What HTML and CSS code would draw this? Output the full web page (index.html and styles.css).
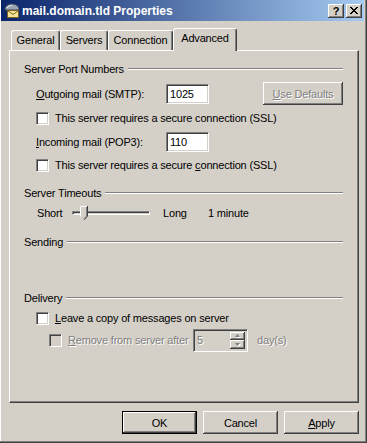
FILE: index.html
```html
<!DOCTYPE html>
<html lang="en">
<head>
    <meta charset="UTF-8">
    <title>mail.domain.tld Properties</title>
    <link rel="stylesheet" href="styles.css">
</head>
<body>
    <div class="window">
        <div class="titlebar">
            <svg class="title-icon" width="16" height="16" viewBox="0 0 16 16">
                <path d="M1 7 C1 3 4 1 8 1 C12 1 15 3 15 7 Z" fill="#9aa4b4" stroke="#3c4658"/>
                <path d="M3 5 C4 3 6 2.5 8 2.5" fill="none" stroke="#e8ecf4"/>
                <rect x="3.5" y="7.5" width="11" height="7" fill="#f6e39a" stroke="#7a6420"/>
                <path d="M3.5 7.5 L9 11.5 L14.5 7.5" fill="none" stroke="#7a6420"/>
            </svg>
            <span class="title-text">mail.domain.tld Properties</span>
            <div class="caption-buttons">
                <span class="cap-btn help">?</span>
                <span class="cap-btn">
                    <svg width="8" height="7" viewBox="0 0 8 7">
                        <path d="M0 0 L7 7 M1 0 L8 7 M7 0 L0 7 M8 0 L1 7" stroke="#000" stroke-width="1"/>
                    </svg>
                </span>
            </div>
        </div>

        <div class="client">
            <div class="tabs">
                <div class="tab tab-general">General</div>
                <div class="tab tab-servers">Servers</div>
                <div class="tab tab-connection">Connection</div>
                <div class="tab active">Advanced</div>
            </div>

            <div class="panel">
                <div class="group-title g-ports">Server Port Numbers</div>

                <div class="row r-smtp">
                    <span class="field-label"><u>O</u>utgoing mail (SMTP):</span>
                    <span class="textbox">1025</span>
                    <span class="btn btn-defaults disabled"><u>U</u>se Defaults</span>
                </div>

                <div class="row r-check">
                    <span class="check"></span>
                    <span>This server requires a secure connection (SSL)</span>
                </div>

                <div class="row r-pop">
                    <span class="field-label"><u>I</u>ncoming mail (POP3):</span>
                    <span class="textbox">110</span>
                </div>

                <div class="row r-check">
                    <span class="check"></span>
                    <span>This server requires a secure <u>c</u>onnection (SSL)</span>
                </div>

                <div class="group-title g-timeouts">Server Timeouts</div>

                <div class="row r-slider">
                    <span class="slider-label">Short</span>
                    <span class="slider">
                        <span class="track"></span>
                        <svg class="thumb" width="8" height="14" viewBox="0 0 8 14">
                            <path d="M0.5 0.5 H7.5 V10 L4 13.5 L0.5 10 Z" fill="#d4d0c8"/>
                            <path d="M0.5 10.5 V0.5 H7" fill="none" stroke="#fff"/>
                            <path d="M6.5 1 V10 L4 12.5" fill="none" stroke="#808080"/>
                            <path d="M7.5 0 V10.2 L4 13.8" fill="none" stroke="#404040"/>
                        </svg>
                    </span>
                    <span class="slider-long">Long</span>
                    <span>1 minute</span>
                </div>

                <div class="group-title g-sending">Sending</div>

                <div class="group-title g-delivery">Delivery</div>

                <div class="row r-leave">
                    <span class="check"></span>
                    <span><u>L</u>eave a copy of messages on server</span>
                </div>

                <div class="row r-remove disabled">
                    <span class="check off"></span>
                    <span class="remove-label"><u>R</u>emove from server after</span>
                    <span class="spin">
                        <span class="spin-value">5</span>
                        <span class="spin-buttons">
                            <span class="spin-btn"><svg width="5" height="3" viewBox="0 0 5 3"><path d="M2.5 0 L5 3 H0 Z" fill="#808080"/></svg></span>
                            <span class="spin-btn"><svg width="5" height="3" viewBox="0 0 5 3"><path d="M0 0 H5 L2.5 3 Z" fill="#808080"/></svg></span>
                        </span>
                    </span>
                    <span class="days">day(s)</span>
                </div>
            </div>

            <div class="buttons">
                <span class="btn default">OK</span>
                <span class="btn">Cancel</span>
                <span class="btn"><u>A</u>pply</span>
            </div>
        </div>
    </div>
</body>
</html>
```

FILE: styles.css
```css
* {
    margin: 0;
    padding: 0;
    box-sizing: border-box;
}

body {
    font-family: 'Liberation Sans', Arial, sans-serif;
    font-size: 11px;
    letter-spacing: -0.18px;
    color: #000;
    background: #d4d0c8;
}

.window {
    width: 367px;
    height: 443px;
    background: #d4d0c8;
    padding: 0 3px 3px 1px;
    box-shadow: inset -1px -1px #404040, inset -2px -2px #808080, inset 1px 0 #fff;
}

/* title bar */
.titlebar {
    height: 21px;
    display: flex;
    align-items: center;
    padding: 0 2px 0 3px;
    background: linear-gradient(to right, #0a246a, #a6caf0);
}

.title-icon {
    flex-shrink: 0;
}

.title-text {
    margin-left: 2px;
    color: #fff;
    font-weight: bold;
    font-size: 12px;
    letter-spacing: 0;
    white-space: nowrap;
}

.caption-buttons {
    margin-left: auto;
    display: flex;
    gap: 2px;
}

.cap-btn {
    width: 16px;
    height: 14px;
    display: flex;
    align-items: center;
    justify-content: center;
    background: #d4d0c8;
    box-shadow: inset -1px -1px #404040, inset 1px 1px #fff, inset -2px -2px #808080;
    font-weight: bold;
    font-size: 11px;
    line-height: 14px;
}

.cap-btn svg {
    margin-top: -1px;
}

/* tabs */
.client {
    padding: 7px 0 0 8px;
}

.tabs {
    display: flex;
    align-items: flex-end;
    height: 22px;
    padding-left: 2px;
}

.tab {
    height: 20px;
    text-align: center;
    line-height: 18px;
    background: #d4d0c8;
    border-top: 1px solid #fff;
    border-left: 1px solid #fff;
    border-right: 1px solid #404040;
    border-radius: 3px 3px 0 0;
    box-shadow: inset -1px 0 #808080;
}

.tab-general { width: 49px; }
.tab-servers { width: 48px; }
.tab-connection { width: 65px; }

.tab.active {
    width: 64px;
    height: 23px;
    margin-bottom: -1px;
    line-height: 18px;
    position: relative;
    z-index: 1;
}

/* property page */
.panel {
    width: 350px;
    height: 353px;
    padding: 11px 15px 0 14px;
    border-top: 1px solid #fff;
    border-left: 1px solid #fff;
    border-right: 1px solid #404040;
    border-bottom: 1px solid #404040;
    box-shadow: inset -1px -1px #808080;
}

.group-title {
    display: flex;
    align-items: center;
    height: 14px;
    white-space: nowrap;
}

.group-title::after {
    content: '';
    flex: 1;
    margin-left: 4px;
    border-top: 1px solid #808080;
    border-bottom: 1px solid #fff;
}

.g-timeouts { margin-top: 13px; }
.g-sending { margin-top: 12px; }
.g-delivery { margin-top: 42px; }

.row {
    display: flex;
    align-items: center;
    padding-left: 12px;
    white-space: nowrap;
}

.r-smtp { height: 23px; margin-top: 6px; }
.r-check { height: 16px; margin-top: 5px; }
.r-pop { height: 20px; margin-top: 6px; }
.r-slider { height: 20px; margin-top: 3px; padding-left: 13px; }
.r-leave { height: 16px; margin-top: 5px; }
.r-remove { height: 24px; margin-top: 2px; padding-left: 25px; }

.field-label {
    width: 130px;
}

.textbox {
    width: 43px;
    height: 20px;
    padding-left: 3px;
    line-height: 18px;
    background: #fff;
    border: 1px solid;
    border-color: #808080 #fff #fff #808080;
    box-shadow: inset 1px 1px #404040, inset -1px -1px #d4d0c8;
}

.check {
    width: 13px;
    height: 13px;
    margin-right: 6px;
    flex-shrink: 0;
    background: #fff;
    border: 1px solid;
    border-color: #808080 #fff #fff #808080;
    box-shadow: inset 1px 1px #404040, inset -1px -1px #d4d0c8;
}

.check.off {
    background: #d4d0c8;
}

/* buttons */
.btn {
    width: 75px;
    height: 23px;
    display: flex;
    align-items: center;
    justify-content: center;
    background: #d4d0c8;
    box-shadow: inset -1px -1px #404040, inset 1px 1px #fff, inset -2px -2px #808080;
}

.btn-defaults {
    width: 80px;
    margin-left: auto;
}

.btn.default {
    border: 1px solid #000;
}

.disabled,
.disabled u {
    color: #808080;
    text-shadow: 1px 1px #fff;
}

/* slider */
.slider-label {
    width: 35px;
}

.slider {
    width: 78px;
    height: 20px;
    display: flex;
    align-items: center;
    position: relative;
}

.track {
    width: 100%;
    height: 4px;
    border: 1px solid;
    border-color: #808080 #fff #fff #808080;
    box-shadow: inset 1px 1px #404040;
}

.thumb {
    position: absolute;
    left: 8px;
    top: 3px;
}

.slider-long {
    width: 45px;
    margin-left: 13px;
}

/* spin box */
.remove-label {
    width: 125px;
}

.spin {
    width: 55px;
    height: 23px;
    display: flex;
    align-items: stretch;
    background: #d4d0c8;
    border: 1px solid;
    border-color: #808080 #fff #fff #808080;
    box-shadow: inset 1px 1px #404040, inset -1px -1px #d4d0c8;
    padding: 2px;
}

.spin-value {
    flex: 1;
    line-height: 17px;
    padding-left: 1px;
}

.spin-buttons {
    width: 15px;
    display: flex;
    flex-direction: column;
}

.spin-btn {
    flex: 1;
    display: flex;
    align-items: center;
    justify-content: center;
    background: #d4d0c8;
    box-shadow: inset -1px -1px #404040, inset 1px 1px #fff, inset -2px -2px #808080;
}

.spin-btn svg {
    filter: drop-shadow(1px 1px 0 #fff);
}

.days {
    margin-left: 9px;
}

.buttons {
    width: 350px;
    display: flex;
    justify-content: flex-end;
    gap: 6px;
    margin-top: 8px;
}
```
